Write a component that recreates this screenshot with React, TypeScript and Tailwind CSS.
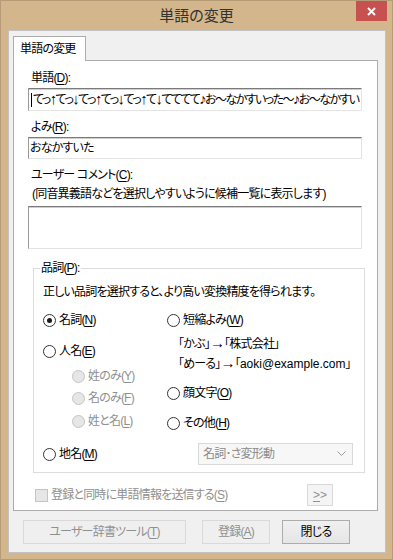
import type { ReactNode } from "react";
import clsx from "clsx";

function Key({ k }: { k: string }) {
  return <span className="underline underline-offset-[2px]">{k}</span>;
}

function Mn({ text, k, colon }: { text: string; k: string; colon?: boolean }) {
  return (
    <>
      {text}(<Key k={k} />){colon && ":"}
    </>
  );
}

// larger symbol glyph so arrows / notes read like the original font
function Sym({ c }: { c: string }) {
  return <span className="text-[15px] leading-[16px]">{c}</span>;
}

function Radio({
  children,
  checked = false,
  disabled = false,
}: {
  children: ReactNode;
  checked?: boolean;
  disabled?: boolean;
}) {
  return (
    <div className="flex h-[20px] shrink-0 items-center gap-[3px] whitespace-nowrap">
      <span
        className={clsx(
          "flex h-[13px] w-[13px] shrink-0 items-center justify-center rounded-full border",
          disabled ? "border-[#c4c4c4] bg-[#e6e6e6]" : "border-[#333333] bg-white"
        )}
      >
        {checked && <span className="h-[5px] w-[5px] rounded-full bg-[#1a1a1a]" />}
      </span>
      <span className={disabled ? "text-[#8f8f8f]" : "text-black"}>{children}</span>
    </div>
  );
}

const field =
  "w-[334px] shrink-0 border border-[#e3e3e3] border-t-[#7a7a7a] border-l-[#9a9a9a] bg-white shadow-[inset_0_1px_0_#cfcfcf]";

const word = "てっ↑てっ↓てっ↑てっ↓てっ↑て↓てててて♪お～なかすいった～♪お～なかすい";

export default function App() {
  return (
    <div className="flex h-[560px] w-[393px] flex-col border border-[#b59c76] bg-[#d3b68b] font-['Liberation_Sans','Noto_Sans_CJK_JP',sans-serif] text-[12px] leading-[16px] tracking-[-0.8px] [font-feature-settings:'palt']">
      {/* title bar */}
      <div className="grid h-[29px] shrink-0 grid-cols-[1fr_auto_1fr] items-start">
        <div />
        <div className="pt-[5px] text-[15px] leading-[20px] tracking-normal text-[#333333]">単語の変更</div>
        <div className="flex justify-end pr-[5px]">
          <button className="flex h-[20px] w-[31px] items-center justify-center bg-[#c75050]">
            <svg width="9" height="9" viewBox="0 0 9 9">
              <path d="M1 1 L8 8 M8 1 L1 8" stroke="#fff" strokeWidth="2" />
            </svg>
          </button>
        </div>
      </div>

      <div className="pl-[7px]">
        <div className="h-[523px] w-[378px] border border-[#c2c2c2] bg-[#f0f0f0] pl-[4px] pt-[5px]">
          {/* tab */}
          <div className="relative z-10 -mb-px flex h-[25px] w-[73px] items-center border border-b-0 border-[#acacac] bg-white pl-[6px]">
            単語の変更
          </div>

          {/* tab panel */}
          <div className="flex h-[451px] w-[365px] flex-col border border-[#acacac] bg-white pl-[14px] pt-[9px]">
            <div className="ml-[3px] shrink-0">
              <Mn text="単語" k="D" colon />
            </div>
            <div className={clsx(field, "mt-[2px] flex h-[23px] items-center overflow-hidden whitespace-nowrap pl-[2px]")}>
              <span className="mr-px h-[14px] w-px shrink-0 bg-black" />
              <span className="tracking-[-1.6px]">
                {Array.from(word).map((c, i) =>
                  c === "↑" || c === "↓" || c === "♪" ? <Sym key={i} c={c} /> : c
                )}
              </span>
            </div>

            <div className="ml-[3px] mt-[8px] shrink-0">
              <Mn text="よみ" k="R" colon />
            </div>
            <div className={clsx(field, "mt-[2px] flex h-[22px] items-center pl-[1px]")}>おなかすいた</div>

            <div className="ml-[3px] mt-[8px] shrink-0">
              <Mn text="ユーザー コメント" k="C" colon />
            </div>
            <div className="ml-[4px] mt-[3px] shrink-0">(同音異義語などを選択しやすいように候補一覧に表示します)</div>
            <div className={clsx(field, "mt-[4px] h-[43px]")} />

            {/* part of speech */}
            <fieldset className="ml-[5px] mt-[11px] w-[332px] shrink-0 border border-[#dcdcdc] pb-[7px]">
              <legend className="ml-[6px] px-[1px]">
                <Mn text="品詞" k="P" colon />
              </legend>
              <div className="pl-[9px] pr-[11px] pt-[8px]">
                <div className="whitespace-nowrap">正しい品詞を選択すると、より高い変換精度を得られます。</div>
                <div className="mt-[10px] flex">
                  <div className="flex w-[124px] shrink-0 flex-col">
                    <Radio checked>
                      <Mn text="名詞" k="N" />
                    </Radio>
                    <div className="mt-[11px]">
                      <Radio>
                        <Mn text="人名" k="E" />
                      </Radio>
                    </div>
                    <div className="ml-[29px] mt-[5px]">
                      <Radio disabled>
                        <Mn text="姓のみ" k="Y" />
                      </Radio>
                    </div>
                    <div className="ml-[29px] mt-[2px]">
                      <Radio disabled>
                        <Mn text="名のみ" k="F" />
                      </Radio>
                    </div>
                    <div className="ml-[29px] mt-[3px]">
                      <Radio disabled>
                        <Mn text="姓と名" k="L" />
                      </Radio>
                    </div>
                  </div>
                  <div className="flex flex-col whitespace-nowrap">
                    <Radio>
                      <Mn text="短縮よみ" k="W" />
                    </Radio>
                    <div className="ml-[11px] mt-[5px]">
                      「かぶ」<Sym c="→" />「株式会社」
                    </div>
                    <div className="ml-[11px] mt-[3px]">
                      「めーる」<Sym c="→" />「<span className="tracking-normal">aoki@example.com</span>」
                    </div>
                    <div className="mt-[11px]">
                      <Radio>
                        <Mn text="顔文字" k="O" />
                      </Radio>
                    </div>
                    <div className="mt-[10px]">
                      <Radio>
                        <Mn text="その他" k="H" />
                      </Radio>
                    </div>
                  </div>
                </div>
                <div className="mt-[10px] flex h-[22px] items-center justify-between">
                  <Radio>
                    <Mn text="地名" k="M" />
                  </Radio>
                  <div className="flex h-[22px] w-[155px] items-center justify-between border border-[#d9d9d9] bg-[#f7f7f7] pl-[4px] pr-[6px] text-[#8a8a8a]">
                    <span>名詞･さ変形動</span>
                    <svg width="9" height="6" viewBox="0 0 9 6">
                      <path d="M0.5 0.5 L4.5 4.5 L8.5 0.5" fill="none" stroke="#9a9a9a" strokeWidth="1" />
                    </svg>
                  </div>
                </div>
              </div>
            </fieldset>

            <div className="mt-[11px] flex h-[22px] w-[305px] shrink-0 items-center justify-between">
              <div className="ml-[7px] flex items-center gap-[3px] text-[#8f8f8f]">
                <span className="h-[13px] w-[13px] border border-[#c4c4c4] bg-[#e6e6e6]" />
                <span>
                  <Mn text="登録と同時に単語情報を送信する" k="S" />
                </span>
              </div>
              <button className="flex h-[22px] w-[26px] items-center justify-center border border-[#d9d9d9] bg-[#f4f4f4] tracking-normal text-[#8f8f8f]">
                <Key k=">" />&gt;
              </button>
            </div>
          </div>

          {/* buttons */}
          <div className="ml-[10px] mt-[9px] flex">
            <button className="h-[24px] w-[163px] border border-[#d9d9d9] bg-[#efefef] text-[#8f8f8f]">
              <Mn text="ユーザー辞書ツール" k="T" />
            </button>
            <button className="ml-[16px] h-[24px] w-[68px] border border-[#d9d9d9] bg-[#efefef] text-[#8f8f8f]">
              <Mn text="登録" k="A" />
            </button>
            <button className="ml-[12px] h-[24px] w-[68px] border border-[#acacac] bg-gradient-to-b from-[#f0f0f0] to-[#e5e5e5] text-black">
              閉じる
            </button>
          </div>
        </div>
      </div>
    </div>
  );
}
